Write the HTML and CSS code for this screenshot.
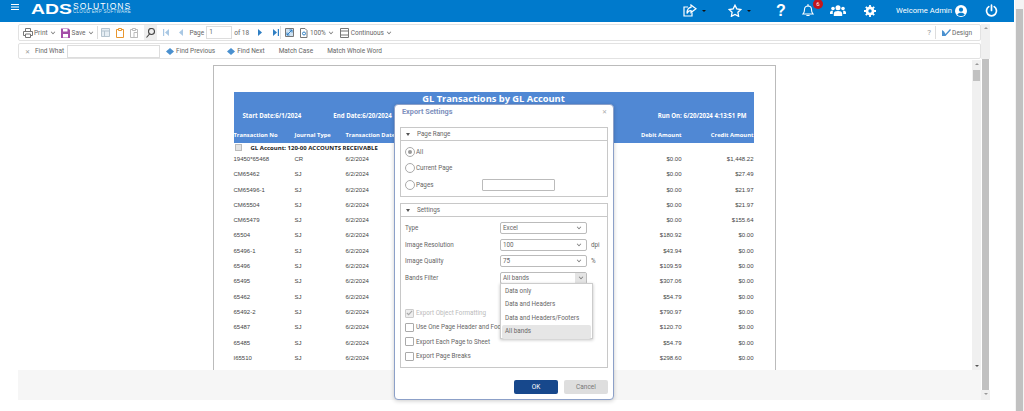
FILE: index.html
```html
<!DOCTYPE html>
<html lang="en">
<head>
    <meta charset="UTF-8">
    <title>GL Transactions by GL Account</title>
    <link rel="stylesheet" href="styles.css">
</head>
<body>
    <div class="page-scroll"><div class="page-thumb"></div></div>

    <header class="topbar">
        <svg class="burger" width="8" height="6" viewBox="0 0 8 6"><path d="M0 .5h8M0 3h8M0 5.500h8" stroke="#fff" stroke-width="1.200"/></svg>
        <div class="logo">
            <span class="logo-ads">ADS</span>
            <div class="logo-side">
                <span class="logo-name">SOLUTIONS</span>
                <span class="logo-sub">CLOUD ERP SOFTWARE</span>
            </div>
        </div>
        <div class="top-icons">
            <svg class="ti-share" width="14" height="13" viewBox="0 0 14 13" fill="none" stroke="#fff" stroke-width="1.200"><path d="M9 8.500V12H1V3h4"/><path d="M8 1l5 3.800-5 3.800V6.500C6 6.500 4.800 7.300 4 9.500 4 6 5.500 3.500 8 3.300z"/></svg>
            <i class="ti-caret"></i>
            <svg class="ti-star" width="14" height="13" viewBox="0 0 14 13" fill="none" stroke="#fff" stroke-width="1.300"><path d="M7 1.200l1.800 3.700 4 .6-2.900 2.800.7 4L7 10.400l-3.600 1.900.7-4L1.200 5.500l4-.6z"/></svg>
            <i class="ti-caret ti-caret-2"></i>
            <span class="ti-help">?</span>
            <div class="ti-bell">
                <svg width="12" height="13" viewBox="0 0 12 13" fill="none" stroke="#fff" stroke-width="1.100"><path d="M1 10c1.300-1.200 1.500-2.500 1.500-4.500C2.500 3.500 4 2 6 2s3.500 1.500 3.500 3.500c0 2 .2 3.300 1.500 4.500z"/><path d="M6 .5V2M4.800 11.500h2.400" stroke-linecap="round"/></svg>
                <span class="badge">6</span>
            </div>
            <svg class="ti-users" width="16" height="11" viewBox="0 0 16 11" fill="#fff"><circle cx="8" cy="2.800" r="2.500"/><circle cx="3" cy="3.500" r="1.800"/><circle cx="13" cy="3.500" r="1.800"/><path d="M3.800 11V8.500C3.800 6.800 5.500 6 8 6s4.200.8 4.200 2.500V11zM0 9V7.500C0 6.300 1 5.700 3 5.800 2.700 6.500 2.800 8 2.800 9zM16 9V7.500c0-1.200-1-1.800-3-1.700.3.700.2 2.200.2 3.200z"/></svg>
            <svg class="ti-gear" width="12" height="12" viewBox="0 0 12 12"><circle cx="6" cy="6" r="3.200" fill="none" stroke="#fff" stroke-width="2.400"/><path d="M6 0v12M0 6h12M1.800 1.800l8.400 8.400M10.200 1.800l-8.400 8.400" stroke="#fff" stroke-width="1.800"/><circle cx="6" cy="6" r="1.700" fill="#007acc"/></svg>
            <span class="welcome">Welcome Admin</span>
            <svg class="ti-user" width="12" height="12" viewBox="0 0 12 12"><circle cx="6" cy="6" r="6" fill="#fff"/><circle cx="6" cy="4.700" r="2.100" fill="#007acc"/><path d="M2.300 9.700C3 8.200 4.300 7.800 6 7.800s3 .4 3.700 1.900C8.700 10.700 7.400 11 6 11s-2.700-.3-3.700-1.300z" fill="#007acc"/></svg>
            <svg class="ti-power" width="13" height="13" viewBox="0 0 13 13" fill="none" stroke="#fff" stroke-width="1.700" stroke-linecap="round"><path d="M3.800 2.600a5 5 0 1 0 5.400 0"/><path d="M6.500 1v5.500"/></svg>
        </div>
    </header>

    <div class="workspace">
        <div class="viewer">
            <div class="toolbar">
                <svg class="tb-print" width="10" height="10" viewBox="0 0 10 10" fill="none" stroke="#777"><path d="M2.500 3V.5h5V3M2 7.500H.5V3.500h9v4H8M2.500 6h5v3.500h-5z"/></svg>
                <span class="tb-label tb-l-print">Print</span><i class="chev"></i>
                <svg class="tb-save" width="9" height="10" viewBox="0 0 9 10"><path d="M0 .5h7.500L9 2v8H0z" fill="#a44ca8"/><path d="M2 1h4.500v2.500H2zM2 6h5v3.500H2z" fill="#fff"/></svg>
                <span class="tb-label tb-l-save">Save</span><i class="chev"></i>
                <i class="sep sep-a"></i>
                <svg class="tb-cut" width="9" height="9" viewBox="0 0 9 9"><path d="M.5.500h8v8h-8z" fill="#e6eef4" stroke="#b5c4cf"/><path d="M.5 3h8M3.500 3v5.500" stroke="#b5c4cf"/></svg>
                <svg class="tb-copy" width="8" height="10" viewBox="0 0 8 10" fill="#fff"><path d="M.5 1.500h7v8h-7z" stroke="#e8962e"/><path d="M2.500.5h3v2h-3z" stroke="#e8962e"/></svg>
                <svg class="tb-paste" width="8" height="10" viewBox="0 0 8 10" fill="#fff"><path d="M.5 1.500h7v8h-7z" stroke="#bbb"/><path d="M2.500.5h3v2h-3zM4 4.500h3.500v5H4z" stroke="#bbb"/></svg>
                <div class="tb-search"><svg width="9" height="10" viewBox="0 0 9 10" fill="none" stroke="#444" stroke-width="1.100"><circle cx="5.500" cy="3.500" r="3"/><path d="M3.500 6L.5 9.500"/></svg></div>
                <svg class="tb-first" width="6" height="7" viewBox="0 0 6 7" fill="#a9c8e4"><path d="M0 0h1.200v7H0zM6 0v7L2 3.500z"/></svg>
                <svg class="tb-prev" width="4" height="7" viewBox="0 0 4 7" fill="#a9c8e4"><path d="M4 0v7L0 3.500z"/></svg>
                <span class="tb-label tb-l-page">Page</span>
                <span class="tb-input">1</span>
                <span class="tb-label tb-l-of">of 18</span>
                <svg class="tb-next" width="4" height="7" viewBox="0 0 4 7" fill="#2f7fc4"><path d="M0 0v7l4-3.500z"/></svg>
                <svg class="tb-last" width="6" height="7" viewBox="0 0 6 7" fill="#2f7fc4"><path d="M0 0v7l4-3.500zM4.800 0H6v7H4.800z"/></svg>
                <i class="sep sep-b"></i>
                <svg class="tb-fit" width="9" height="9" viewBox="0 0 9 9"><path d="M.5.500h8v8h-8z" fill="#cfe2f2" stroke="#777"/><path d="M2 7l5-5M4.500 2H7v2.500M2 4.500V7h2.500" stroke="#2f7fc4" fill="none"/></svg>
                <svg class="tb-zoom" width="8" height="10" viewBox="0 0 8 10" fill="none" stroke="#777"><path d="M.5.500h4.500l2 2v7h-6.500z"/><circle cx="4" cy="5.500" r="1.500" stroke="#2f7fc4"/></svg>
                <span class="tb-label tb-l-zoom">100%</span><i class="chev"></i>
                <svg class="tb-cont" width="9" height="10" viewBox="0 0 9 10" fill="none" stroke="#777"><path d="M.5.500h8v9h-8zM.5 3h8M.5 7h8"/></svg>
                <span class="tb-label tb-l-cont">Continuous</span><i class="chev"></i>
                <div class="tb-right">
                    <span class="tb-q">?</span>
                    <i class="sep"></i>
                    <svg width="9" height="8" viewBox="0 0 9 8" fill="#4a90cf"><path d="M0 1l2 1.500L3.500 5 8 0l1 1-5.500 6H0z"/></svg>
                    <span class="tb-label tb-l-design">Design</span>
                </div>
            </div>

            <div class="findbar">
                <span class="find-x">✕</span>
                <span class="tb-label f-what">Find What</span>
                <span class="tb-input f-input"></span>
                <svg class="f-arrow" width="8" height="7" viewBox="0 0 8 7" fill="#4a90cf"><path d="M4 0l4 3.500-4 3.500-4-3.500z"/></svg>
                <span class="tb-label f-prev">Find Previous</span>
                <svg class="f-arrow f-arrow-2" width="8" height="7" viewBox="0 0 8 7" fill="#4a90cf"><path d="M4 0l4 3.500-4 3.500-4-3.500z"/></svg>
                <span class="tb-label f-next">Find Next</span>
                <span class="tb-label f-case">Match Case</span>
                <span class="tb-label f-word">Match Whole Word</span>
            </div>

            <div class="doc-area">
                <div class="doc-pane">
                    <div class="report">
                        <div class="band">
                            <div class="band-title">GL Transactions by GL Account</div>
                            <div class="band-dates">
                                <span>Start Date:6/1/2024</span>
                                <span class="band-end">End Date:6/20/2024</span>
                                <span class="band-run">Run On: 6/20/2024 4:13:51 PM</span>
                            </div>
                            <div class="row band-head">
                                <span class="c-no">Transaction No</span>
                                <span class="c-type">Journal Type</span>
                                <span class="c-date">Transaction Date</span>
                                <span class="c-debit">Debit Amount</span>
                                <span class="c-credit">Credit Amount</span>
                            </div>
                        </div>
                        <div class="group"><i class="minus"></i>GL Account: 120-00 ACCOUNTS RECEIVABLE</div>
                        <div class="row"><span class="c-no">19450*65468</span><span class="c-type">CR</span><span class="c-date">6/2/2024</span><span class="c-debit">$0.00</span><span class="c-credit">$1,448.22</span></div>
                        <div class="row"><span class="c-no">CM65462</span><span class="c-type">SJ</span><span class="c-date">6/2/2024</span><span class="c-debit">$0.00</span><span class="c-credit">$27.49</span></div>
                        <div class="row"><span class="c-no">CM65496-1</span><span class="c-type">SJ</span><span class="c-date">6/2/2024</span><span class="c-debit">$0.00</span><span class="c-credit">$21.97</span></div>
                        <div class="row"><span class="c-no">CM65504</span><span class="c-type">SJ</span><span class="c-date">6/2/2024</span><span class="c-debit">$0.00</span><span class="c-credit">$21.97</span></div>
                        <div class="row"><span class="c-no">CM65479</span><span class="c-type">SJ</span><span class="c-date">6/2/2024</span><span class="c-debit">$0.00</span><span class="c-credit">$155.64</span></div>
                        <div class="row"><span class="c-no">65504</span><span class="c-type">SJ</span><span class="c-date">6/2/2024</span><span class="c-debit">$180.92</span><span class="c-credit">$0.00</span></div>
                        <div class="row"><span class="c-no">65496-1</span><span class="c-type">SJ</span><span class="c-date">6/2/2024</span><span class="c-debit">$43.94</span><span class="c-credit">$0.00</span></div>
                        <div class="row"><span class="c-no">65496</span><span class="c-type">SJ</span><span class="c-date">6/2/2024</span><span class="c-debit">$109.59</span><span class="c-credit">$0.00</span></div>
                        <div class="row"><span class="c-no">65495</span><span class="c-type">SJ</span><span class="c-date">6/2/2024</span><span class="c-debit">$307.06</span><span class="c-credit">$0.00</span></div>
                        <div class="row"><span class="c-no">65462</span><span class="c-type">SJ</span><span class="c-date">6/2/2024</span><span class="c-debit">$54.79</span><span class="c-credit">$0.00</span></div>
                        <div class="row"><span class="c-no">65492-2</span><span class="c-type">SJ</span><span class="c-date">6/2/2024</span><span class="c-debit">$790.97</span><span class="c-credit">$0.00</span></div>
                        <div class="row"><span class="c-no">65487</span><span class="c-type">SJ</span><span class="c-date">6/2/2024</span><span class="c-debit">$120.70</span><span class="c-credit">$0.00</span></div>
                        <div class="row"><span class="c-no">65485</span><span class="c-type">SJ</span><span class="c-date">6/2/2024</span><span class="c-debit">$54.79</span><span class="c-credit">$0.00</span></div>
                        <div class="row"><span class="c-no">I65510</span><span class="c-type">SJ</span><span class="c-date">6/2/2024</span><span class="c-debit">$298.60</span><span class="c-credit">$0.00</span></div>
                    </div>
                </div>
                <div class="doc-scroll">
                    <i class="arr-up"></i>
                    <div class="doc-thumb"></div>
                    <i class="arr-down"></i>
                </div>
            </div>
            <div class="viewer-foot"></div>
        </div>
        <div class="outer-scroll">
            <div class="outer-top"><i class="arr-up"></i></div>
            <div class="outer-thumb"></div>
            <div class="outer-bottom"><i class="arr-down"></i></div>
        </div>
    </div>

    <div class="modal">
        <div class="modal-title">Export Settings<span class="modal-close">✕</span></div>

        <div class="group-box box-range">
            <div class="box-head"><i class="tri"></i>Page Range</div>
            <div class="radio-row"><i class="radio on"></i>All</div>
            <div class="radio-row"><i class="radio"></i>Current Page</div>
            <div class="radio-row"><i class="radio"></i>Pages<span class="pages-input"></span></div>
        </div>

        <div class="group-box box-settings">
            <div class="box-head"><i class="tri"></i>Settings</div>
            <div class="set-row"><span class="set-label">Type</span><span class="select">Excel<i class="chev"></i></span></div>
            <div class="set-row"><span class="set-label">Image Resolution</span><span class="select">100<i class="chev"></i></span><span class="unit">dpi</span></div>
            <div class="set-row"><span class="set-label">Image Quality</span><span class="select">75<i class="chev"></i></span><span class="unit">%</span></div>
            <div class="set-row"><span class="set-label">Bands Filter</span><span class="select open">All bands<b class="sel-btn"><i class="chev"></i></b></span></div>
            <div class="checks">
                <div class="check-row disabled"><i class="check"><svg width="8" height="8" viewBox="0 0 8 8" fill="none" stroke="#aaa" stroke-width="1.300"><path d="M1 4l2 2 4-4.500"/></svg></i>Export Object Formatting</div>
                <div class="check-row"><i class="check"></i>Use One Page Header and Footer</div>
                <div class="check-row"><i class="check"></i>Export Each Page to Sheet</div>
                <div class="check-row"><i class="check"></i>Export Page Breaks</div>
            </div>
        </div>

        <div class="modal-foot">
            <button class="btn btn-ok">OK</button>
            <button class="btn btn-cancel">Cancel</button>
        </div>

        <div class="dropdown">
            <div class="dd-item">Data only</div>
            <div class="dd-item">Data and Headers</div>
            <div class="dd-item">Data and Headers/Footers</div>
            <div class="dd-item dd-active">All bands</div>
        </div>
    </div>
</body>
</html>
```

FILE: styles.css
```css
body {
    margin: 0;
    width: 1024px;
    height: 411px;
    overflow: hidden;
    background: #fff;
    font-family: Roboto, "Liberation Sans", sans-serif;
    color: #666;
    position: relative;
}
i {
    display: block;
    font-style: normal;
}

/* top bar */
.topbar {
    width: 1014px;
    height: 22px;
    background: #007acc;
    display: flex;
    align-items: center;
    color: #fff;
}
.burger {
    margin-left: 11px;
    margin-top: -9px;
}
.logo {
    display: flex;
    align-items: center;
    margin-left: 12px;
    margin-top: -5px;
}
.logo-ads {
    font: bold 15.500px/14px "Liberation Sans", sans-serif;
    width: 42px;
    transform: scaleX(1.250);
    transform-origin: left center;
}
.logo-side {
    display: flex;
    flex-direction: column;
    margin-left: 0;
}
.logo-name {
    font: 8.500px/7px "Liberation Sans", sans-serif;
    letter-spacing: 1px;
}
.logo-sub {
    font: 4.500px/4px "Liberation Sans", sans-serif;
    letter-spacing: .3px;
    color: #cfe6f6;
}
.top-icons {
    margin-left: auto;
    display: flex;
    align-items: center;
    margin-top: -1px;
}
.ti-share { margin-right: 5px; }
.ti-caret {
    width: 0;
    height: 0;
    border: 2px solid transparent;
    border-top: 2.500px solid #111;
    border-bottom: 0;
    margin-right: 22px;
}
.ti-star { margin-right: 5px; }
.ti-caret-2 { margin-right: 24px; }
.ti-help {
    font: bold 16px "Liberation Sans", sans-serif;
    width: 12px;
    margin-right: 15px;
    text-align: center;
}
.ti-bell {
    position: relative;
    height: 13px;
    margin-right: 16px;
}
.ti-bell svg { display: block; }
.badge {
    position: absolute;
    left: 11px;
    top: -5px;
    width: 10px;
    height: 10px;
    border-radius: 50%;
    background: #c4161c;
    font-size: 6px;
    line-height: 10px;
    text-align: center;
}
.ti-users { margin-right: 18px; }
.ti-gear { margin-right: 20px; }
.welcome {
    font-size: 7.700px;
    margin-right: 3px;
}
.ti-user { margin-right: 18px; }
.ti-power { margin-right: 16px; }

/* page scrollbar */
.page-scroll {
    position: absolute;
    left: 1015px;
    top: 0;
    width: 9px;
    height: 411px;
    background: #f4f4f4;
}
.page-thumb {
    margin: 9px 0 0 1px;
    width: 7px;
    height: 402px;
    background: #c1c1c1;
}

/* viewer */
.workspace {
    display: flex;
    margin: 2px 0 0 18px;
    width: 972px;
}
.viewer {
    width: 963px;
}
.toolbar, .findbar {
    width: 961px;
    border: 1px solid #e2e2e2;
    border-radius: 2px;
    background: #fff;
    display: flex;
    align-items: center;
}
.toolbar {
    height: 15px;
}
.findbar {
    height: 14px;
    margin-top: 2px;
}
.tb-label {
    font-size: 6.500px;
    white-space: nowrap;
    color: #666;
}
.chev {
    width: 3px;
    height: 3px;
    border-right: 1px solid #777;
    border-bottom: 1px solid #777;
    transform: rotate(45deg) scale(.8);
    margin: -2px 0 0 3px;
}
.sep {
    width: 1px;
    height: 13px;
    background: #ddd;
}
.tb-print { margin-left: 4px; }
.tb-l-print { margin-left: 1px; }
.tb-save { margin-left: 6px; }
.tb-l-save { margin-left: 2px; }
.sep-a { margin-left: 4px; }
.tb-cut { margin-left: 3px; }
.tb-copy { margin-left: 6px; }
.tb-paste { margin-left: 6px; }
.tb-search {
    width: 13px;
    height: 15px;
    margin-left: 6px;
    background: #eee;
    display: flex;
    align-items: center;
    justify-content: center;
}
.tb-first { margin-left: 6px; }
.tb-prev { margin-left: 10px; }
.tb-l-page { margin-left: 7px; }
.tb-input {
    width: 22px;
    height: 11px;
    margin-left: 2px;
    border: 1px solid #ddd;
    font-size: 6.500px;
    line-height: 11px;
    padding-left: 2px;
    color: #666;
}
.tb-l-of { margin-left: 2px; }
.tb-next { margin-left: 9px; }
.tb-last { margin-left: 11px; }
.sep-b { margin-left: 1px; }
.tb-fit { margin-left: 4px; }
.tb-zoom { margin-left: 6px; }
.tb-l-zoom { margin-left: 2px; }
.tb-cont { margin-left: 7px; }
.tb-l-cont { margin-left: 2px; }
.tb-right {
    margin-left: auto;
    display: flex;
    align-items: center;
    margin-right: 8px;
}
.tb-q {
    font-size: 8px;
    color: #999;
    margin-right: 4px;
}
.tb-right .sep { margin-right: 6px; }
.tb-l-design { margin-left: 1px; }

.find-x {
    font-size: 6px;
    color: #999;
    margin-left: 6px;
}
.f-what { margin-left: 5px; }
.f-input {
    width: 91px;
    padding: 0;
    margin-left: 3px;
}
.f-arrow { margin-left: 6px; }
.f-prev { margin-left: 2px; }
.f-arrow-2 { margin-left: 12px; }
.f-next { margin-left: 2px; }
.f-case { margin-left: 14px; }
.f-word { margin-left: 14px; }

.doc-area {
    display: flex;
    height: 310px;
    margin-top: 1px;
}
.doc-pane {
    width: 954px;
    padding: 5px 2px 0 0;
    box-sizing: border-box;
    display: flex;
    justify-content: center;
    overflow: hidden;
}
.report {
    width: 541px;
    height: 400px;
    border: 1px solid #bbb;
    padding: 26px 0 0 20px;
    flex: none;
}
.band {
    width: 520px;
    height: 51px;
    background: #5088d4;
    color: #fff;
    font: bold 6.100px "Open Sans", sans-serif;
}
.band-title {
    font-size: 9.300px;
    line-height: 14px;
    text-align: center;
}
.band-dates {
    display: flex;
    padding: 4px 7px 0 9px;
    height: 18px;
    line-height: 12px;
}
.band-end { margin-left: 32px; }
.band-run { margin-left: auto; }
.row {
    display: flex;
    width: 520px;
    height: 15.300px;
    line-height: 15.300px;
    font-size: 6px;
    color: #444;
    font-family: "Liberation Sans", sans-serif;
}
.band-head {
    font: bold 5.800px/15px "Open Sans", sans-serif;
    color: #fff;
    white-space: nowrap;
}
.c-no { width: 61px; }
.c-type { width: 51px; }
.c-date { flex: 1; }
.c-debit { width: 60px; text-align: right; }
.c-credit { width: 72px; text-align: right; }
.group {
    display: flex;
    align-items: center;
    height: 9px;
    padding: 0 0 0 1px;
    font: bold 6px "Open Sans", sans-serif;
    color: #222;
}
.minus {
    width: 5px;
    height: 5px;
    border: 1px solid #bbb;
    background: #e4e4e4;
    margin-right: 9px;
}
.doc-scroll {
    width: 9px;
    background: #f0f0f0;
    display: flex;
    flex-direction: column;
    align-items: center;
}
.doc-thumb {
    width: 7px;
    height: 11px;
    background: #c1c1c1;
    margin-top: 5px;
}
.arr-up, .arr-down {
    width: 0;
    height: 0;
    border: 2px solid transparent;
}
.arr-up {
    border-bottom: 2px solid #999;
    border-top: 0;
    margin-top: 3px;
}
.arr-down {
    border-top: 2px solid #555;
    border-bottom: 0;
    margin-top: auto;
    margin-bottom: 3px;
}
.viewer-foot {
    height: 30px;
    background: #f6f6f6;
}
.outer-scroll {
    width: 9px;
    height: 376px;
    display: flex;
    flex-direction: column;
    align-items: center;
}
.outer-top {
    width: 9px;
    height: 35px;
    background: #f0f0f0;
    display: flex;
    justify-content: center;
}
.outer-thumb {
    width: 7px;
    height: 331px;
    background: #c1c1c1;
}
.outer-bottom {
    width: 9px;
    height: 10px;
    background: #f0f0f0;
    display: flex;
    justify-content: center;
}
.outer-bottom .arr-down { margin-top: 3px; border-top-color: #999; }

/* export dialog */
.modal {
    position: absolute;
    left: 394px;
    top: 104px;
    width: 220px;
    height: 296px;
    background: #fff;
    border: 1px solid #8ca0c8;
    border-radius: 4px;
    padding: 0 5px;
    box-sizing: border-box;
    box-shadow: 0 1px 4px rgba(0, 0, 0, .2);
    font-size: 6.300px;
    color: #666;
}
.modal-title {
    display: flex;
    justify-content: space-between;
    height: 22px;
    padding: 2px 1px 0 2px;
    font-weight: bold;
    font-size: 7.300px;
    line-height: 9px;
    box-sizing: border-box;
    color: #7e90bd;
}
.modal-close {
    font-weight: normal;
    font-size: 6px;
    color: #aaa;
}
.group-box {
    border: 1px solid #c8c8c8;
    box-sizing: border-box;
    width: 208px;
}
.box-range { height: 70px; }
.box-settings {
    height: 165px;
    margin-top: 6px;
}
.box-head {
    display: flex;
    align-items: center;
    height: 12px;
    border-bottom: 1px solid #c8c8c8;
    padding-left: 5px;
}
.tri {
    width: 0;
    height: 0;
    border: 2.500px solid transparent;
    border-top: 3px solid #555;
    border-bottom: 0;
    margin-right: 7px;
}
.radio-row {
    display: flex;
    align-items: center;
    height: 16.500px;
    padding-left: 4px;
}
.radio-row:nth-child(2) { margin-top: 2.500px; }
.radio {
    width: 8px;
    height: 8px;
    border: 1px solid #aaa;
    border-radius: 50%;
    margin-right: 1px;
    position: relative;
}
.radio.on::after {
    content: "";
    position: absolute;
    left: 2px;
    top: 2px;
    width: 4px;
    height: 4px;
    border-radius: 50%;
    background: #999;
}
.pages-input {
    width: 71px;
    height: 10px;
    border: 1px solid #bbb;
    border-radius: 1px;
    margin-left: 48px;
}
.set-row {
    display: flex;
    align-items: center;
    height: 16.500px;
    padding-left: 4px;
}
.set-row:nth-child(2) { margin-top: 3px; }
.set-label { width: 95px; }
.select {
    position: relative;
    display: flex;
    align-items: center;
    justify-content: space-between;
    width: 87px;
    height: 12px;
    border: 1px solid #bbb;
    border-radius: 2px;
    padding: 0 5px 0 2px;
    box-sizing: border-box;
}
.select .chev { margin-top: -2px; }
.select.open { padding-right: 0; }
.sel-btn {
    width: 11px;
    height: 10px;
    background: #e4e4e4;
    display: flex;
    justify-content: center;
    align-items: center;
}
.sel-btn .chev { margin: -2px 0 0 0; }
.unit { margin-left: 4px; }
.checks { margin-top: 20px; }
.check-row {
    display: flex;
    align-items: center;
    height: 14.300px;
    padding-left: 4px;
    white-space: nowrap;
}
.check {
    width: 7px;
    height: 7px;
    border: 1px solid #aaa;
    border-radius: 1px;
    margin-right: 2px;
    display: flex;
    align-items: center;
    justify-content: center;
}
.disabled { color: #bbb; }
.disabled .check { background: #eee; border-color: #ccc; }
.modal-foot {
    display: flex;
    justify-content: flex-end;
    gap: 6px;
    margin-top: 12px;
}
.btn {
    width: 44px;
    height: 14px;
    border: 0;
    border-radius: 2px;
    padding: 0;
    font-family: Roboto, "Liberation Sans", sans-serif;
    font-size: 6.500px;
}
.btn-ok {
    background: #17488c;
    color: #fff;
}
.btn-cancel {
    background: #dedede;
    color: #777;
}
.dropdown {
    position: absolute;
    left: 105px;
    top: 178px;
    width: 93px;
    height: 56px;
    background: #fff;
    border: 1px solid #ccc;
    box-shadow: 0 1px 3px rgba(0, 0, 0, .25);
    padding: 1px;
    box-sizing: border-box;
}
.dd-item {
    height: 13.400px;
    line-height: 13.400px;
    padding-left: 3px;
    white-space: nowrap;
}
.dd-active {
    background: #e6e6e6;
    border-radius: 2px;
}
```
